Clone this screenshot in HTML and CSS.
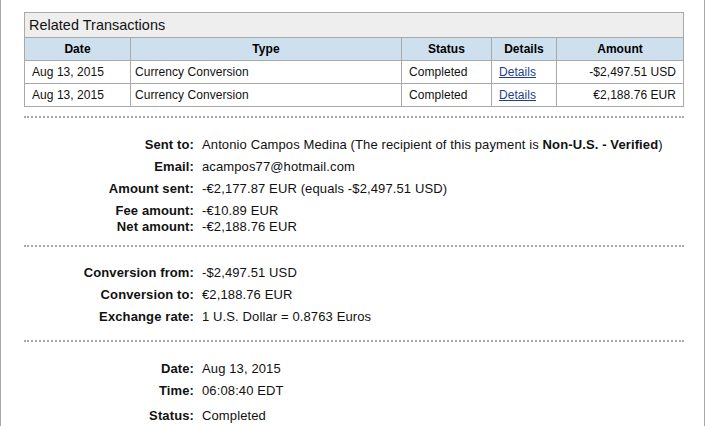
FILE: index.html
```html
<!DOCTYPE html>
<html>
<head>
<meta charset="utf-8">
<link rel="stylesheet" href="styles.css">
</head>
<body>
<div class="page">
  <table class="tx">
    <colgroup>
      <col class="c-date"><col class="c-type"><col class="c-status"><col class="c-details"><col class="c-amount">
    </colgroup>
    <tr><td class="caption" colspan="5">Related Transactions</td></tr>
    <tr class="head"><th>Date</th><th>Type</th><th>Status</th><th>Details</th><th>Amount</th></tr>
    <tr>
      <td class="date">Aug 13, 2015</td><td class="type">Currency Conversion</td><td class="status">Completed</td>
      <td class="details"><a href="#">Details</a></td><td class="amount">-$2,497.51 USD</td>
    </tr>
    <tr>
      <td class="date">Aug 13, 2015</td><td class="type">Currency Conversion</td><td class="status">Completed</td>
      <td class="details"><a href="#">Details</a></td><td class="amount">€2,188.76 EUR</td>
    </tr>
  </table>

  <div class="sep sep1"></div>

  <div class="info info1">
    <div class="row"><div class="lbl">Sent to:</div><div class="val">Antonio Campos Medina (The recipient of this payment is <b>Non-U.S. - Verified</b>)</div></div>
    <div class="row"><div class="lbl">Email:</div><div class="val">acampos77@hotmail.com</div></div>
    <div class="row"><div class="lbl">Amount sent:</div><div class="val">-€2,177.87 EUR (equals -$2,497.51 USD)</div></div>
    <div class="row"><div class="lbl">Fee amount:</div><div class="val">-€10.89 EUR</div></div>
    <div class="row tight"><div class="lbl">Net amount:</div><div class="val">-€2,188.76 EUR</div></div>
  </div>

  <div class="sep sep2"></div>

  <div class="info info2">
    <div class="row"><div class="lbl">Conversion from:</div><div class="val">-$2,497.51 USD</div></div>
    <div class="row"><div class="lbl">Conversion to:</div><div class="val">€2,188.76 EUR</div></div>
    <div class="row"><div class="lbl">Exchange rate:</div><div class="val">1 U.S. Dollar = 0.8763 Euros</div></div>
  </div>

  <div class="sep sep3"></div>

  <div class="info info3">
    <div class="row"><div class="lbl">Date:</div><div class="val">Aug 13, 2015</div></div>
    <div class="row"><div class="lbl">Time:</div><div class="val">06:08:40 EDT</div></div>
    <div class="row wide"><div class="lbl">Status:</div><div class="val">Completed</div></div>
  </div>
</div>
</body>
</html>
```

FILE: styles.css
```css
html, body {
  margin: 0;
  padding: 0;
  background: #fff;
}
body {
  font-family: "Liberation Sans", Arial, sans-serif;
  color: #111;
  overflow: hidden;
}
.page {
  box-sizing: border-box;
  width: 705px;
  height: 426px;
  border-left: 1px solid #a9a9a9;
  border-right: 1px solid #a9a9a9;
  padding: 12px 20px 0 23px;
}
.tx {
  border-collapse: collapse;
  table-layout: fixed;
  width: 660px;
  font-size: 12px;
  letter-spacing: 0.05px;
}
.tx td, .tx th {
  border: 1px solid #a9a9a9;
  height: 22px;
  padding: 0;
  line-height: 14px;
  white-space: nowrap;
}
.c-date { width: 106px; }
.c-type { width: 271px; }
.c-status { width: 90px; }
.c-details { width: 65px; }
.c-amount { width: 127px; }
.tx .caption {
  background: #eeeeee;
  font-size: 14.4px;
  height: 24px;
  padding-left: 4px;
  color: #111;
}
.head th {
  background: #cedfee;
  font-weight: bold;
  text-align: center;
  color: #000;
}
.tx .date { padding-left: 7px; }
.tx .type { padding-left: 4px; }
.tx .status { padding-left: 7px; }
.tx .details { padding-left: 7px; }
.tx .amount { text-align: right; padding-right: 7px; }
.details a { color: #1d3f8c; text-decoration: underline; }

.sep {
  width: 660px;
  border-top: 2px dotted #a9a9a9;
}
.sep1 { margin-top: 9px; }
.sep2 { margin-top: 10px; }
.sep3 { margin-top: 15px; }

.info {
  font-size: 13px;
  letter-spacing: 0.12px;
  display: flex;
  flex-direction: column;
  gap: 6px;
}
.info1 { padding-top: 19px; }
.info2 { padding-top: 18px; }
.info3 { padding-top: 19px; }
.row {
  display: grid;
  grid-template-columns: 170px 1fr;
  column-gap: 8px;
  line-height: 16px;
  white-space: nowrap;
}
.row.tight { margin-top: -6px; }
.row.wide { margin-top: 3px; }
.lbl {
  text-align: right;
  font-weight: bold;
  color: #111;
}
.val b { font-weight: bold; }
```
